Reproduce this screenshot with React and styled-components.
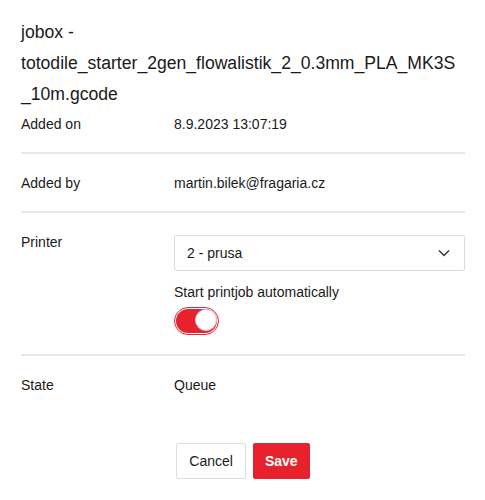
import styled, { createGlobalStyle } from "styled-components";

const GlobalStyle = createGlobalStyle`
  body {
    margin: 0;
    background: #ffffff;
    font-family: "Liberation Sans", Arial, sans-serif;
    color: #1c1c1c;
  }
`;

export default function App() {
  return (
    <>
      <GlobalStyle />
      <Page>
        <Title>
          jobox -<br />
          totodile_starter_2gen_flowalistik_2_0.3mm_PLA_MK3S
          <br />
          _10m.gcode
        </Title>
        <Row first>
          <Label>Added on</Label>
          <Value>8.9.2023 13:07:19</Value>
        </Row>
        <Row>
          <Label>Added by</Label>
          <Value>martin.bilek@fragaria.cz</Value>
        </Row>
        <Row>
          <Label>Printer</Label>
          <Field>
            <Select>
              <span>2 - prusa</span>
              <svg width="12" height="8" viewBox="0 0 12 8">
                <path d="M1 1.5 L6 6.5 L11 1.5" fill="none" stroke="#333" strokeWidth="1.4" />
              </svg>
            </Select>
            <SwitchLabel>Start printjob automatically</SwitchLabel>
            <Switch>
              <Track />
            </Switch>
          </Field>
        </Row>
        <Row last>
          <Label>State</Label>
          <Value>Queue</Value>
        </Row>
        <Actions>
          <Button>Cancel</Button>
          <Button primary>Save</Button>
        </Actions>
      </Page>
    </>
  );
}

const Page = styled.div`
  width: 444px;
  padding: 17px 20px 0 21px;
`;

const Title = styled.h1`
  margin: 0;
  font-size: 17.6px;
  line-height: 31px;
  font-weight: 400;
  color: #1a1a1a;
  white-space: nowrap;
`;

const Row = styled.div`
  display: grid;
  grid-template-columns: 153px 1fr;
  align-items: start;
  padding: ${props => (props.first ? "3px" : "18px")} 0 ${props => (props.last ? "0" : "17px")};
  border-bottom: ${props => (props.last ? "none" : "2px solid #e8e8e8")};
`;

const Label = styled.div`
  font-size: 14px;
  line-height: 22px;
  color: #1a1a1a;
`;

const Value = styled.div`
  font-size: 14px;
  line-height: 22px;
  color: #1a1a1a;
`;

const Field = styled.div`
  display: flex;
  flex-direction: column;
  align-items: flex-start;
  padding: 4px 0 2px;
`;

const Select = styled.div`
  box-sizing: border-box;
  width: 291px;
  height: 36px;
  display: flex;
  align-items: center;
  justify-content: space-between;
  padding: 0 14px 0 12px;
  border: 1px solid #dcdcdc;
  border-radius: 2px;
  font-size: 14px;
  color: #1a1a1a;
`;

const SwitchLabel = styled.div`
  margin-top: 10px;
  font-size: 14px;
  line-height: 22px;
  color: #1a1a1a;
`;

const Switch = styled.div`
  box-sizing: border-box;
  margin-top: 4px;
  width: 45px;
  height: 28px;
  border-radius: 14px;
  border: 1px solid #e8222c;
  padding: 1px;
  display: flex;
  background: #ffffff;
`;

const Track = styled.div`
  flex: 1;
  border-radius: 12px;
  background: #e8222c;
  display: flex;
  justify-content: flex-end;
  &::after {
    content: "";
    width: 22px;
    height: 22px;
    box-sizing: border-box;
    border-radius: 50%;
    background: #ffffff;
    border: 1px solid #cfcfcf;
  }
`;

const Actions = styled.div`
  display: flex;
  justify-content: center;
  gap: 7px;
  margin-top: 47px;
`;

const Button = styled.button`
  height: 36px;
  padding: 0 ${props => (props.primary ? "11px" : "12px")};
  border-radius: 2px;
  border: 1px solid ${props => (props.primary ? "#e8222c" : "#dddddd")};
  background: ${props => (props.primary ? "#e8222c" : "#ffffff")};
  color: ${props => (props.primary ? "#ffffff" : "#1a1a1a")};
  font-family: "Liberation Sans", Arial, sans-serif;
  font-size: 14px;
  font-weight: ${props => (props.primary ? 700 : 400)};
`;
